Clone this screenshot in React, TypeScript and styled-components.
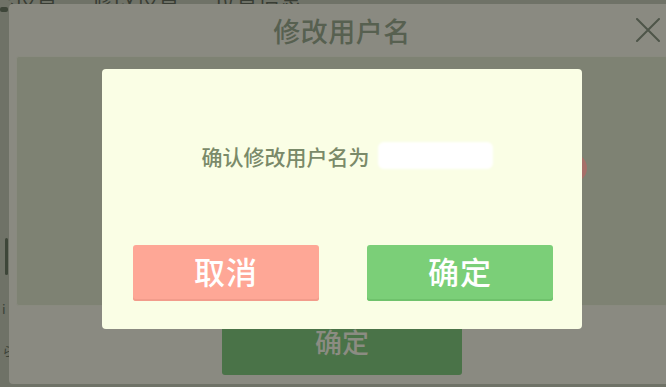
import styled, { createGlobalStyle } from "styled-components";

const GlobalStyle = createGlobalStyle`
  html, body {
    margin: 0;
    padding: 0;
    background: #6f7267;
  }
  * {
    box-sizing: border-box;
  }
`;

const cjk = `"Noto Sans CJK SC", "Noto Sans", sans-serif`;

const Page = styled.div`
  position: relative;
  width: 666px;
  height: 387px;
  overflow: hidden;
  background: #6f7267;
  font-family: ${cjk};
  display: flex;
  flex-direction: column;
`;

const TabStrip = styled.div`
  height: 4px;
  overflow: hidden;
  display: flex;
  align-items: flex-end;
  gap: 34px;
  flex-shrink: 0;
`;

const Tab = styled.span<{ $offset?: number }>`
  font-size: 22px;
  line-height: 22px;
  margin-bottom: -4px;
  color: #393d34;
  margin-left: ${(p) => p.$offset ?? 0}px;
  white-space: nowrap;
`;

const Body = styled.div`
  display: flex;
  flex: 1;
  min-height: 0;
`;

const LeftRail = styled.div`
  width: 9px;
  flex-shrink: 0;
  display: flex;
  flex-direction: column;
  align-items: flex-start;
  padding-top: 3px;
`;

const RailBar = styled.div<{ $h: number; $top: number; $w?: number }>`
  width: ${(p) => p.$w ?? 3}px;
  height: ${(p) => p.$h}px;
  margin-top: ${(p) => p.$top}px;
  margin-left: ${(p) => (p.$w ? 0 : 5)}px;
  border-radius: 2px;
  background: #3e4639;
`;

const RailGlyph = styled.span<{ $top: number }>`
  margin-top: ${(p) => p.$top}px;
  margin-left: 2px;
  font-size: 13px;
  line-height: 14px;
  color: #3c4238;
`;

const BackDialog = styled.div`
  width: 666px;
  flex-shrink: 0;
  height: 380px;
  background: #8a8a81;
  border-radius: 4px 0 0 4px;
  display: flex;
  flex-direction: column;
`;

const BackHeader = styled.div`
  height: 52px;
  display: flex;
  align-items: center;
  justify-content: center;
  position: relative;
`;

const BackTitle = styled.h2`
  margin: 0;
  font-size: 27px;
  font-weight: 500;
  color: #576050;
  letter-spacing: 0.5px;
`;

const CloseButton = styled.button`
  position: absolute;
  right: 14px;
  top: 13px;
  width: 26px;
  height: 26px;
  padding: 0;
  border: none;
  background: transparent;
  display: flex;
  align-items: center;
  justify-content: center;
`;

const BackPanel = styled.div`
  position: relative;
  height: 250px;
  margin: 0 7px;
  background: #7e8273;
  border: 1px solid #898a7f;
  border-radius: 3px;
`;

const Dot = styled.div`
  position: absolute;
  left: 540px;
  top: 96px;
  width: 30px;
  height: 30px;
  border-radius: 50%;
  background: #a66f69;
`;

const BackFooter = styled.div`
  flex: 1;
  display: flex;
  justify-content: center;
  align-items: flex-start;
  padding-top: 9px;
`;

const BackConfirm = styled.div`
  width: 240px;
  height: 60px;
  border-radius: 3px;
  background: #4a7348;
  display: flex;
  align-items: center;
  justify-content: center;
  padding-bottom: 8px;
  font-size: 27px;
  font-weight: 500;
  color: #8b8c82;
`;

const Modal = styled.div`
  position: absolute;
  left: 102px;
  top: 69px;
  width: 480px;
  height: 260px;
  background: #fafee5;
  border-radius: 4px;
  display: flex;
  flex-direction: column;
  padding: 0 29px 28px 31px;
`;

const Message = styled.div`
  height: 176px;
  display: flex;
  align-items: center;
  justify-content: center;
  gap: 8px;
  padding-left: 8px;
  padding-bottom: 2px;
  font-size: 21px;
  font-weight: 500;
  color: #7a8a69;
`;

const Redacted = styled.span`
  display: inline-block;
  width: 115px;
  height: 27px;
  margin-top: -2px;
  border-radius: 6px;
  background: #ffffff;
  filter: blur(1.2px);
`;

const ButtonRow = styled.div`
  display: flex;
  justify-content: space-between;
`;

const ActionButton = styled.button<{ $variant: "cancel" | "ok" }>`
  width: 186px;
  height: 56px;
  border: none;
  border-radius: 3px;
  padding: 0 0 6px;
  font-family: ${cjk};
  font-size: 31px;
  font-weight: 500;
  letter-spacing: 1px;
  color: #ffffff;
  background: ${(p) => (p.$variant === "cancel" ? "#fea796" : "#7bcf78")};
  box-shadow: inset 0 -2px 0
    ${(p) => (p.$variant === "cancel" ? "#f29c8b" : "#6fc26c")};
`;

export default function App() {
  return (
    <>
      <GlobalStyle />
      <Page>
        <TabStrip>
          <Tab $offset={-8}>已设置</Tab>
          <Tab>修改设置</Tab>
          <Tab>位置信息</Tab>
        </TabStrip>
        <Body>
          <LeftRail>
            <RailBar $w={8} $h={5} $top={0} />
            <RailBar $h={37} $top={226} />
            <RailGlyph $top={27}>i</RailGlyph>
            <RailGlyph $top={28}>ら</RailGlyph>
          </LeftRail>
          <BackDialog>
            <BackHeader>
              <BackTitle>修改用户名</BackTitle>
              <CloseButton aria-label="关闭">
                <svg width="24" height="24" viewBox="0 0 24 24">
                  <path
                    d="M1 1 L23 23 M23 1 L1 23"
                    stroke="#4e5549"
                    strokeWidth="2"
                    strokeLinecap="round"
                  />
                </svg>
              </CloseButton>
            </BackHeader>
            <BackPanel>
              <Dot />
            </BackPanel>
            <BackFooter>
              <BackConfirm>确定</BackConfirm>
            </BackFooter>
          </BackDialog>
        </Body>
        <Modal>
          <Message>
            <span>确认修改用户名为</span>
            <Redacted />
          </Message>
          <ButtonRow>
            <ActionButton $variant="cancel">取消</ActionButton>
            <ActionButton $variant="ok">确定</ActionButton>
          </ButtonRow>
        </Modal>
      </Page>
    </>
  );
}
